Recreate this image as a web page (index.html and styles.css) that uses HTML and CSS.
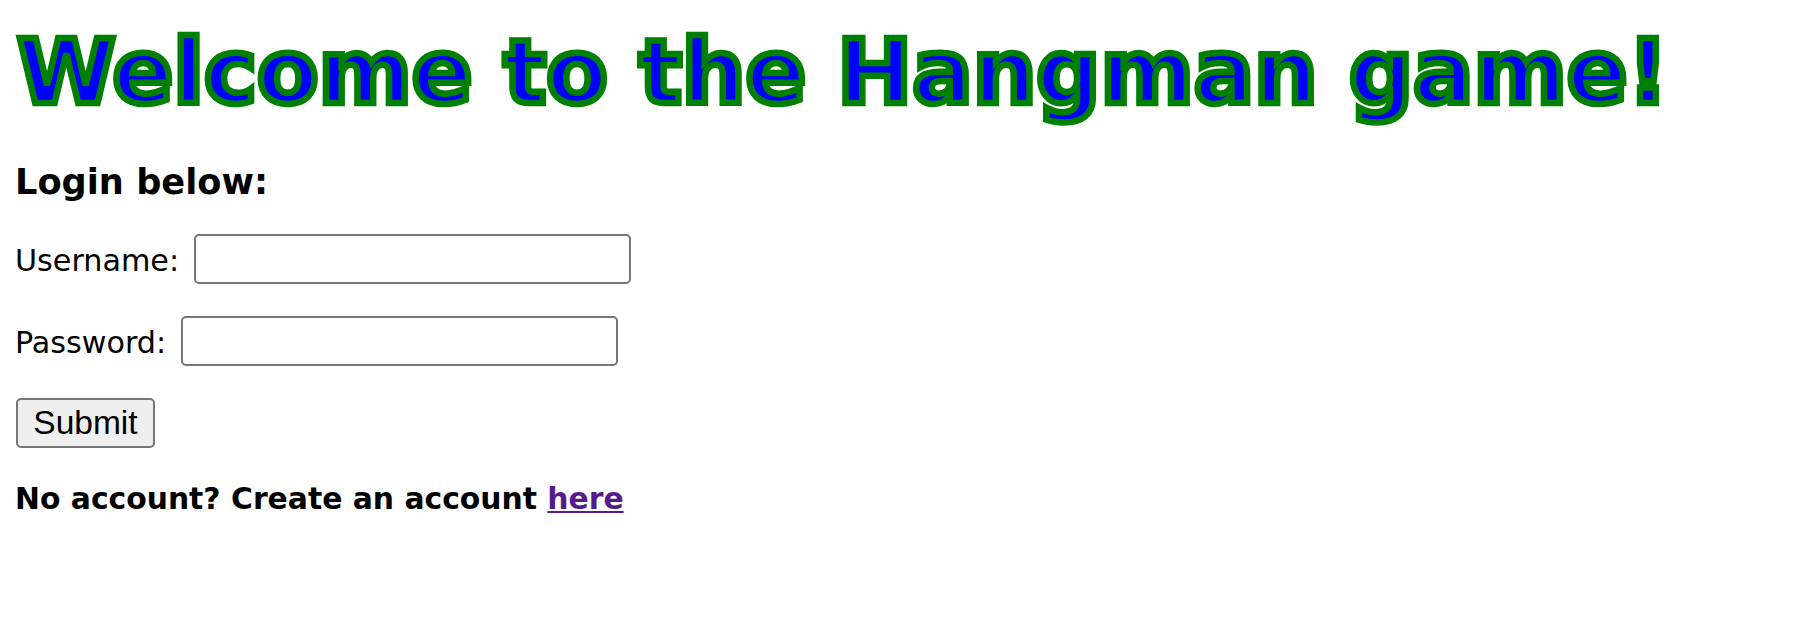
FILE: index.html
```html
<!DOCTYPE html>
<html lang="en">
<head>
<meta charset="utf-8">
<title>Hangman</title>
<link rel="stylesheet" href="styles.css">
</head>
<body>
<main class="page">
  <h1 class="title">Welcome to the Hangman game!</h1>
  <h3 class="subtitle">Login below:</h3>
  <form class="login-form">
    <div class="field">
      <label class="field-label" for="username">Username:</label>
      <input class="field-input" id="username" type="text">
    </div>
    <div class="field">
      <label class="field-label" for="password">Password:</label>
      <input class="field-input" id="password" type="password">
    </div>
    <div class="actions">
      <button class="submit-btn" type="button">Submit</button>
    </div>
  </form>
  <p class="signup">No account? Create an account <a class="signup-link" href="#">here</a></p>
</main>
</body>
</html>
```

FILE: styles.css
```css
html, body {
  margin: 0;
  padding: 0;
  background: #ffffff;
}

.page {
  padding: 20px 15px 0 15px;
  font-family: "DejaVu Sans", Verdana, sans-serif;
  font-size: 29.6px;
  color: #000000;
  display: flex;
  flex-direction: column;
  align-items: flex-start;
}

.title {
  margin: 0;
  font-size: 89.5px;
  font-weight: bold;
  line-height: normal;
  color: #0000ff;
  -webkit-text-stroke: 6.5px #008000;
  padding-left: 2px;
}

.subtitle {
  margin: 37px 0 0 0;
  font-size: 35.2px;
  font-weight: bold;
  line-height: normal;
}

.login-form {
  margin-top: 32px;
  display: flex;
  flex-direction: column;
  gap: 32px;
}

.field {
  display: flex;
  align-items: center;
  gap: 15px;
}

.field-label {
  font-size: 30.2px;
  line-height: normal;
  padding-top: 3px;
}

.field-input {
  box-sizing: border-box;
  width: 437px;
  height: 50px;
  border: 2px solid #767676;
  border-radius: 5px;
  padding: 2px 6px;
  font-size: 29px;
  background: #ffffff;
}

.actions {
  display: flex;
  padding-left: 1px;
}

.submit-btn {
  box-sizing: border-box;
  width: 139px;
  height: 50px;
  padding: 0 14px;
  background: #efefef;
  border: 2px solid #767676;
  border-radius: 5px;
  font-family: "Liberation Sans", Arial, sans-serif;
  font-size: 33.5px;
  color: #000000;
}

.signup {
  margin: 33px 0 0 0;
  font-size: 29.8px;
  font-weight: bold;
  line-height: normal;
}

.signup-link {
  color: #551a8b;
  text-decoration: underline;
}
```
